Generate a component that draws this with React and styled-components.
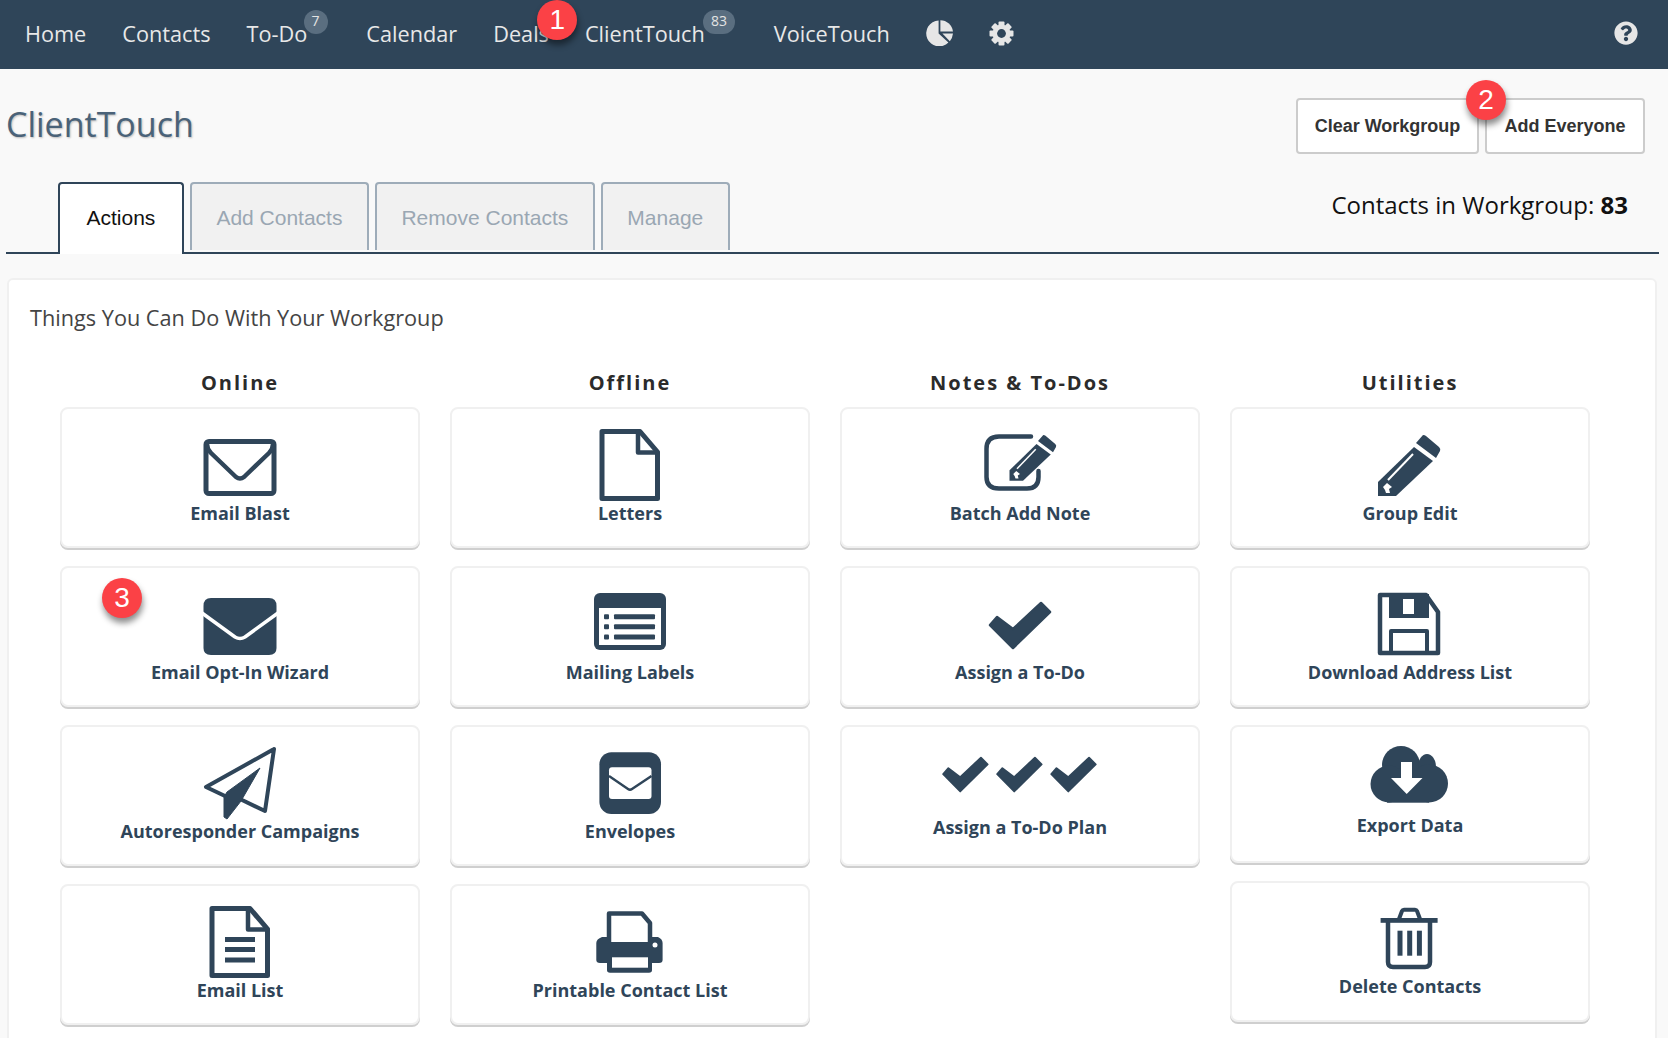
import React from "react";
import styled, { createGlobalStyle } from "styled-components";
import { FaQuestionCircle } from "react-icons/fa";

const navy = "#2f4559";

const GlobalStyle = createGlobalStyle`
  html, body {
    margin: 0;
    height: 100%;
    overflow: hidden;
    background: #f9f9f9;
    font-family: "Open Sans", sans-serif;
  }
  * {
    box-sizing: border-box;
  }
`;

const Nav = styled.nav`
  height: 69px;
  background: ${navy};
  display: flex;
  align-items: center;
  padding: 0 30px 3px 25px;
  gap: 36px;
`;

const NavItem = styled.div`
  position: relative;
  font-size: 21.7px;
  font-weight: 500;
  color: #e8e8e8;
  white-space: nowrap;
  margin-right: ${(p) => p.$extra || 0}px;
`;

const NavIcon = styled.span`
  display: flex;
  color: #e6e6e6;
  margin-left: ${(p) => (p.$push ? "auto" : "0")};
`;

const CountBadge = styled.span`
  position: absolute;
  left: ${(p) => p.$left}px;
  top: -9px;
  width: ${(p) => p.$w}px;
  height: 24px;
  border-radius: 12px;
  background: #5a6e80;
  color: #e4e4e4;
  font-size: 14px;
  font-weight: 400;
  line-height: 22px;
  text-align: center;
`;

const RedBadge = styled.span`
  position: absolute;
  left: ${(p) => p.$left}px;
  top: ${(p) => p.$top}px;
  z-index: 5;
  width: 40px;
  height: 40px;
  border-radius: 50%;
  background: #fb4146;
  box-shadow: 1px 5px 6px rgba(0, 0, 0, 0.45);
  color: #fff;
  font-family: "Liberation Sans", Arial, sans-serif;
  font-size: 28px;
  font-weight: 400;
  line-height: 40px;
  text-align: center;
`;

const Page = styled.div`
  padding: 0 9px 0 6px;
`;

const Header = styled.header`
  display: flex;
  justify-content: space-between;
  height: 185px;
  border-bottom: 2px solid ${navy};
`;

const TitleBlock = styled.div`
  display: flex;
  flex-direction: column;
`;

const Title = styled.h1`
  flex: none;
  margin: 34px 0 0;
  height: 79px;
  font-size: 34px;
  line-height: 42px;
  font-weight: 500;
  color: #4a6278;
  text-shadow: 1px 1px 2px #bbb;
`;

const Tabs = styled.div`
  flex: none;
  display: flex;
  gap: 6px;
  padding-left: 52px;
`;

const Tab = styled.div`
  height: ${(p) => (p.$active ? "72px" : "68px")};
  padding: 0 ${(p) => p.$pad}px;
  border: 2px solid ${(p) => (p.$active ? navy : "#9eacb9")};
  border-bottom: 0;
  border-radius: 4px 4px 0 0;
  background: ${(p) => (p.$active ? "#fff" : "#f1f1f1")};
  color: ${(p) => (p.$active ? "#111" : "#9aa7b3")};
  font-family: "Liberation Sans", Arial, sans-serif;
  font-size: 21px;
  line-height: 67px;
  position: relative;
  z-index: 1;
`;

const HeaderRight = styled.div`
  width: 349px;
  margin-right: 14px;
  padding-top: 29px;
`;

const Buttons = styled.div`
  display: flex;
  gap: 6px;
`;

const Button = styled.div`
  position: relative;
  height: 56px;
  flex: ${(p) => p.$flex};
  border: 2px solid #ccc;
  border-radius: 4px;
  background: #fff;
  color: #333;
  font-family: "Liberation Sans", Arial, sans-serif;
  font-size: 18px;
  font-weight: 700;
  line-height: 52px;
  text-align: center;
`;

const Count = styled.div`
  margin-top: 36px;
  padding-right: 17px;
  text-align: right;
  font-size: 24px;
  line-height: 30px;
  color: #111;
  b {
    font-weight: 700;
  }
`;

const Panel = styled.section`
  margin: 24px 2px 0 1px;
  padding: 23px 20px 30px 21px;
  background: #fff;
  border: 2px solid #f0f0f0;
  border-radius: 6px;
`;

const PanelTitle = styled.div`
  font-size: 21.7px;
  line-height: 30px;
  color: #444;
`;

const Columns = styled.div`
  display: grid;
  grid-template-columns: repeat(4, 360px);
  gap: 30px;
  margin: 36px 0 0 30px;
`;

const Column = styled.div`
  display: flex;
  flex-direction: column;
  gap: 18px;
`;

const ColumnTitle = styled.h2`
  margin: 0 0 -8px;
  height: 28px;
  font-size: 20px;
  line-height: 28px;
  font-weight: 700;
  letter-spacing: 2px;
  color: #2b2b2b;
  text-align: center;
`;

const Card = styled.div`
  position: relative;
  height: ${(p) => p.$h || 141}px;
  padding-top: 18px;
  display: flex;
  flex-direction: column;
  align-items: center;
  background: #fff;
  border: 2px solid #f0f0f0;
  border-radius: 8px;
  box-shadow: 0 2px 0 #cfcfcf;
`;

const CardIcon = styled.svg`
  display: block;
  width: 90px;
  height: ${(p) => p.$slot || 78}px;
  overflow: visible;
  fill: ${navy};
  flex: none;
`;

const CardLabel = styled.div`
  margin-top: -1px;
  font-size: 18px;
  line-height: 18px;
  font-weight: 700;
  color: ${navy};
  white-space: nowrap;
`;

const line = { fill: "none", stroke: navy, strokeLinejoin: "round", strokeLinecap: "round" };

const Pencil = ({ transform }) => (
  <g transform={transform}>
    <path d="M58 8 Q60 8 61 9 L74 20 Q76 22 75 24 L71 31 L51 16 Z" />
    <path d="M49 20 L68 34 L31 69 H13 V55 Z" />
    <path d="M48 27 L23 53" fill="none" stroke="#fff" strokeWidth="2" />
    <path d="M18 60 L22 56 L27 60 L24 62 L25 66 H21 L20 63 Z" fill="#fff" />
  </g>
);

const Check = ({ transform }) => (
  <path
    transform={transform}
    d="M38 62 L15 39 L22 31 L38 43 L66 17 L75 26 Z"
    stroke={navy}
    strokeWidth="2.5"
    strokeLinejoin="round"
  />
);

const Doc = () => (
  <>
    <path {...line} strokeWidth="5" d="M17 4.5 H55 L72.5 25 V71.5 H17 Z" />
    <path {...line} strokeWidth="4.5" d="M53 4.5 V25.5 H72.5" />
  </>
);

const icons = {
  blast: (
    <>
      <rect {...line} strokeWidth="5" x="11" y="14.5" width="68" height="52" rx="3" />
      <path {...line} strokeWidth="4.5" d="M12 17 Q12 22 16 26 L41 50 Q45 53 49 50 L74 26 Q78 22 78 17" />
    </>
  ),
  letters: <Doc />,
  note: (
    <>
      <path
        {...line}
        strokeWidth="4.5"
        d="M56 9.5 H24 Q11.5 9.5 11.5 22 V50 Q11.5 61.5 24 61.5 H52 Q63.5 61.5 63.5 50 V44"
      />
      <Pencil transform="translate(24.75 2) scale(0.75)" />
    </>
  ),
  edit: <Pencil />,
  optin: (
    <>
      <path d="M16 12 H74 Q81.5 12 81.5 20 V62 Q81.5 69 74 69 H16 Q8.5 69 8.5 62 V20 Q8.5 12 16 12 Z" />
      <path
        d="M7 27 L40 51 Q45 54 50 51 L83 27"
        fill="none"
        stroke="#fff"
        strokeWidth="3.5"
      />
    </>
  ),
  labels: (
    <>
      <rect x="9" y="7" width="72" height="57" rx="6" />
      <rect x="14" y="22" width="62" height="37" fill="#fff" />
      {[30.7, 40.7, 51].map((y) => (
        <g key={y}>
          <rect x="19" y={y - 2.5} width="5" height="5" rx="1" />
          <rect x="29" y={y - 2.5} width="41" height="5" rx="1" />
        </g>
      ))}
    </>
  ),
  check: <Check />,
  save: (
    <>
      <path {...line} strokeWidth="4.5" d="M15 9 H61 L73 26 V67 H15 Z" />
      <path d="M24 8 H64 V32 H24 Z" />
      <rect x="38" y="13" width="11" height="15" fill="#fff" />
      <path {...line} strokeWidth="4" d="M26 65 V45 H62 V65" />
    </>
  ),
  plane: (
    <>
      <path {...line} strokeWidth="4" d="M79 4 L70 66 L45 54 M79 4 L11 42 L30 51" />
      <path d="M65 23 L32 47 L29 52 V72 L32 74 L46 56 Z" stroke={navy} strokeWidth="1" strokeLinejoin="round" />
    </>
  ),
  envelope: (
    <>
      <rect x="14.4" y="7.3" width="61.6" height="61.7" rx="12" />
      <rect x="24" y="22.3" width="42.5" height="31.7" rx="3" fill="#fff" />
      <path d="M24 31 L43 44 Q45 45.5 47 44 L66.5 31" fill="none" stroke={navy} strokeWidth="2.4" />
    </>
  ),
  plan: (
    <>
      <Check transform="translate(-42.9 -0.1) scale(0.74 0.75)" />
      <Check transform="translate(11.1 -0.1) scale(0.74 0.75)" />
      <Check transform="translate(65.2 -0.1) scale(0.74 0.75)" />
    </>
  ),
  cloud: (
    <>
      <circle cx="36" cy="20" r="19" />
      <ellipse cx="62" cy="22" rx="9" ry="13" />
      <circle cx="24" cy="39" r="18.5" />
      <circle cx="64" cy="38.5" r="19" />
      <rect x="22" y="30" width="42" height="27.7" />
      <path d="M36 17 H47 V33 H57.5 L41.7 49 L26 33 H36 Z" fill="#fff" />
    </>
  ),
  list: (
    <>
      <Doc />
      <rect x="30" y="33" width="30" height="5" />
      <rect x="30" y="43" width="30" height="5" />
      <rect x="30" y="53.5" width="30" height="5" />
    </>
  ),
  printer: (
    <>
      <path {...line} strokeWidth="4.5" d="M24 38 V9.5 H57 L65 19 V38" />
      <path d="M17 33 H24 V38 H65 V33 H73 Q77.6 35 77.6 39 V56 Q77.6 59 74 59 H15 Q11.3 59 11.3 56 V39 Q11.3 35 17 33 Z" />
      <circle cx="70" cy="41" r="2.5" fill="#fff" />
      <path d="M22 50 H67 V66 Q67 68.7 64 68.7 H25 Q22 68.7 22 66 Z" />
      <rect x="27" y="53.3" width="36" height="10.4" fill="#fff" />
    </>
  ),
  trash: (
    <>
      <path {...line} strokeWidth="4.5" d="M23 20 V61 Q23 66 28 66 H60 Q65 66 65 61 V20" />
      <rect x="15.6" y="17" width="57" height="4.8" />
      <path {...line} strokeWidth="4" d="M34 18 L37 10 Q37.5 8.7 39 8.7 H50 Q51.5 8.7 52 10 L55 18" />
      <rect x="32.5" y="29.7" width="5" height="25" />
      <rect x="42.2" y="29.7" width="5" height="25" />
      <rect x="51.9" y="29.7" width="5" height="25" />
    </>
  ),
};

const columns = [
  {
    title: "Online",
    cards: [
      { label: "Email Blast", icon: "blast" },
      { label: "Email Opt-In Wizard", icon: "optin", badge: "3" },
      { label: "Autoresponder Campaigns", icon: "plane" },
      { label: "Email List", icon: "list" },
    ],
  },
  {
    title: "Offline",
    cards: [
      { label: "Letters", icon: "letters" },
      { label: "Mailing Labels", icon: "labels" },
      { label: "Envelopes", icon: "envelope" },
      { label: "Printable Contact List", icon: "printer" },
    ],
  },
  {
    title: "Notes & To-Dos",
    cards: [
      { label: "Batch Add Note", icon: "note" },
      { label: "Assign a To-Do", icon: "check" },
      { label: "Assign a To-Do Plan", icon: "plan", slot: 74 },
    ],
  },
  {
    title: "Utilities",
    cards: [
      { label: "Group Edit", icon: "edit" },
      { label: "Download Address List", icon: "save" },
      { label: "Export Data", icon: "cloud", slot: 72, h: 138 },
      { label: "Delete Contacts", icon: "trash", slot: 77, h: 141 },
    ],
  },
];

const PieIcon = () => (
  <svg width="27" height="26" viewBox="0 0 27 26">
    <path d="M12.6 0.4 V13.6 L22.4 22.6 A13 13 0 1 1 12.6 0.4 Z" fill="currentColor" />
    <path d="M14.4 0.2 A12.8 12.8 0 0 1 27 11.6 H14.4 Z" fill="currentColor" />
    <path d="M16.4 13.6 H27 Q26.6 18 23.8 21.2 Z" fill="currentColor" />
  </svg>
);

const GearIcon = () => (
  <svg width="25" height="25" viewBox="0 0 25 25">
    {[0, 45, 90, 135].map((deg) => (
      <rect
        key={deg}
        x="9.5"
        y="0.5"
        width="6"
        height="24"
        rx="1"
        fill="currentColor"
        transform={`rotate(${deg} 12.5 12.5)`}
      />
    ))}
    <circle cx="12.5" cy="12.5" r="9" fill="currentColor" />
    <circle cx="12.5" cy="12.5" r="4.4" fill={navy} />
  </svg>
);

const App = () => (
  <>
    <GlobalStyle />
    <Nav>
      <NavItem>Home</NavItem>
      <NavItem>Contacts</NavItem>
      <NavItem $extra={23}>
        To-Do
        <CountBadge $left={57} $w={24}>7</CountBadge>
      </NavItem>
      <NavItem>Calendar</NavItem>
      <NavItem>
        Deals
        <RedBadge $left={44} $top={-19}>1</RedBadge>
      </NavItem>
      <NavItem $extra={33}>
        ClientTouch
        <CountBadge $left={118} $w={32}>83</CountBadge>
      </NavItem>
      <NavItem>VoiceTouch</NavItem>
      <NavIcon>
        <PieIcon />
      </NavIcon>
      <NavIcon>
        <GearIcon />
      </NavIcon>
      <NavIcon $push>
        <FaQuestionCircle size={24} />
      </NavIcon>
    </Nav>
    <Page>
      <Header>
        <TitleBlock>
          <Title>ClientTouch</Title>
          <Tabs>
            <Tab $active $pad={26.5}>Actions</Tab>
            <Tab $pad={24.5}>Add Contacts</Tab>
            <Tab $pad={24.5}>Remove Contacts</Tab>
            <Tab $pad={24.5}>Manage</Tab>
          </Tabs>
        </TitleBlock>
        <HeaderRight>
          <Buttons>
            <Button $flex="0 0 183px">
              Clear Workgroup
              <RedBadge $left={168} $top={-20}>2</RedBadge>
            </Button>
            <Button $flex="1">Add Everyone</Button>
          </Buttons>
          <Count>
            Contacts in Workgroup: <b>83</b>
          </Count>
        </HeaderRight>
      </Header>
      <Panel>
        <PanelTitle>Things You Can Do With Your Workgroup</PanelTitle>
        <Columns>
          {columns.map((col) => (
            <Column key={col.title}>
              <ColumnTitle>{col.title}</ColumnTitle>
              {col.cards.map((card) => (
                <Card key={card.label} $h={card.h}>
                  {card.badge && <RedBadge $left={40} $top={10}>{card.badge}</RedBadge>}
                  <CardIcon $slot={card.slot} viewBox={`0 0 90 ${card.slot || 78}`}>
                    {icons[card.icon]}
                  </CardIcon>
                  <CardLabel>{card.label}</CardLabel>
                </Card>
              ))}
            </Column>
          ))}
        </Columns>
      </Panel>
    </Page>
  </>
);

export default App;
